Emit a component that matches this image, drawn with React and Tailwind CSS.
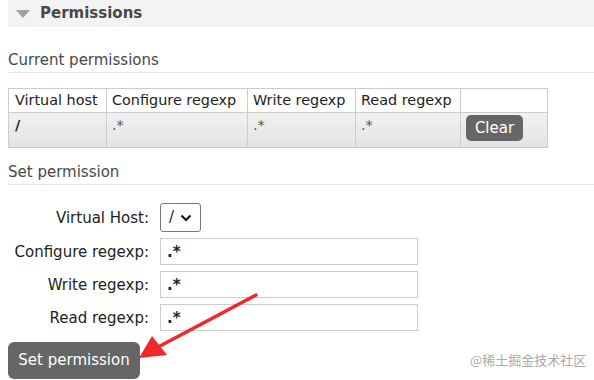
import React from 'react';

const font = { fontFamily: '"DejaVu Sans", Verdana, sans-serif' };

const Field = ({ label, children }) => (
  <>
    <label className="text-right text-[15px] text-[#222] pr-[11px] leading-[26px] whitespace-nowrap">{label}</label>
    <div>{children}</div>
  </>
);

const App = () => {
  return (
    <div className="relative w-[594px] h-[380px] bg-white overflow-hidden pl-2" style={font}>
      <div className="h-[27px] bg-[#f3f3f3] flex items-center pl-[8px]">
        <svg width="14" height="8" viewBox="0 0 14 8" className="mr-[10px]">
          <path d="M0 0 L14 0 L7 8 Z" fill="#a0a0a0" />
        </svg>
        <span className="text-[15px] font-bold text-[#484848]">Permissions</span>
      </div>

      <h3 className="mt-[24px] pb-[3px] text-[15px] text-[#484848] border-b border-[#e4e4e4] leading-[18px]">
        Current permissions
      </h3>

      <table className="mt-[15px] border-collapse text-[14.4px] text-[#222] table-fixed">
        <thead>
          <tr className="h-[24px]">
            <th className="w-[98px] border border-[#ccc] font-normal text-left px-[6px] whitespace-nowrap">Virtual host</th>
            <th className="w-[141px] border border-[#ccc] font-normal text-left px-[5px] whitespace-nowrap">Configure regexp</th>
            <th className="w-[108px] border border-[#ccc] font-normal text-left px-[5px] whitespace-nowrap">Write regexp</th>
            <th className="w-[105px] border border-[#ccc] font-normal text-left px-[5px] whitespace-nowrap">Read regexp</th>
            <th className="w-[87px] border border-[#ccc]"></th>
          </tr>
        </thead>
        <tbody>
          <tr className="h-[35px] bg-gradient-to-b from-[#f2f2f2] to-[#e2e2e2]">
            <td className="border border-[#ccc] align-top px-[6px] pt-[2px] font-bold">/</td>
            <td className="border border-[#ccc] align-top px-[5px] pt-[2px] text-[#555]">.*</td>
            <td className="border border-[#ccc] align-top px-[5px] pt-[2px] text-[#555]">.*</td>
            <td className="border border-[#ccc] align-top px-[5px] pt-[2px] text-[#555]">.*</td>
            <td className="border border-[#ccc] align-top pl-[5px] pt-[2px]">
              <button className="bg-[#666] text-white text-[15px] rounded-[5px] w-[57px] h-[26px] leading-[26px]">
                Clear
              </button>
            </td>
          </tr>
        </tbody>
      </table>

      <h3 className="mt-[15px] pb-[3px] text-[15px] text-[#484848] border-b border-[#e4e4e4] leading-[18px]">
        Set permission
      </h3>

      <div className="mt-[18px] grid grid-cols-[152px_auto] gap-y-[6px] items-center">
        <Field label="Virtual Host:">
          <div className="w-[41px] h-[29px] border border-[#777] rounded-[3px] flex items-center justify-between px-[8px] text-[15px] text-[#222]">
            <span>/</span>
            <svg width="12" height="8" viewBox="0 0 12 8">
              <path d="M1.5 1.5 L6 6 L10.5 1.5" fill="none" stroke="#111" strokeWidth="2" />
            </svg>
          </div>
        </Field>
        <Field label="Configure regexp:">
          <input className="w-[258px] h-[27px] border border-[#ccc] px-[6px] text-[15px] font-bold text-[#222] outline-none" defaultValue=".*" />
        </Field>
        <Field label="Write regexp:">
          <input className="w-[258px] h-[27px] border border-[#ccc] px-[6px] text-[15px] font-bold text-[#222] outline-none" defaultValue=".*" />
        </Field>
        <Field label="Read regexp:">
          <input className="w-[258px] h-[27px] border border-[#ccc] px-[6px] text-[15px] font-bold text-[#222] outline-none" defaultValue=".*" />
        </Field>
      </div>

      <button className="mt-[11px] w-[132px] h-[37px] bg-[#666] text-white text-[15px] rounded-[6px]">
        Set permission
      </button>

      <svg className="absolute left-0 top-0 pointer-events-none" width="594" height="380">
        <path d="M256 295 L160 346" stroke="#f02828" strokeWidth="3.5" strokeLinecap="round" />
        <path d="M139 358 L152 336 L167 355 Z" fill="#f02828" />
      </svg>

      <span
        className="absolute left-[470px] top-[350px] text-[13px] text-[#aaa]"
        style={{ fontFamily: '"Noto Sans CJK SC", sans-serif' }}
      >
        @稀土掘金技术社区
      </span>
    </div>
  );
};

export default App;
